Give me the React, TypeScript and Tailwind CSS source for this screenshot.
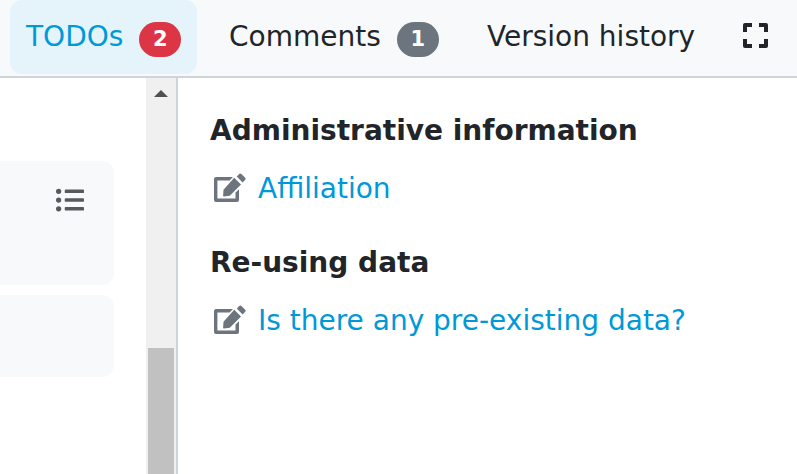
import { FaListUl } from "react-icons/fa";

function EditIcon() {
  return (
    <svg className="mb-[3px] ml-1 mr-3 h-[29px] w-8 shrink-0 fill-[#6c757d]" viewBox="0 0 32 29">
      <path d="M2 4H19L15.6 7.4H3.4V25.6H21.5V19.6L25 16.2V27Q25 29 23 29H2Q0 29 0 27V6Q0 4 2 4Z" />
      <path d="M20.2 4.8L27 11.6L15.8 22.8L9.9 23.5Q9 23.6 9.1 22.7L9.5 16.8L20.2 4.8Z" strokeLinejoin="round" />
      <path d="M22.8 3.4L25 1.2Q26.3 0 27.6 1.2L31 4.6Q32.2 5.9 31 7.1L28.6 9.4Z" />
    </svg>
  );
}

function Section({ title, item }: { title: string; item: string }) {
  return (
    <section className="mb-8">
      <h2 className="h-[42px] leading-[42px] text-[28px] font-bold text-[#212529]">{title}</h2>
      <a className="mt-4 flex h-[42px] items-center text-[28px] text-[#0099d8]">
        <EditIcon />
        <span className="whitespace-nowrap">{item}</span>
      </a>
    </section>
  );
}

export default function App() {
  return (
    <div className="flex h-[474px] w-[797px] flex-col overflow-hidden bg-white font-['DejaVu_Sans',sans-serif] text-[28px] text-[#212529]">
      <header className="flex h-[78px] shrink-0 border-b-2 border-[#ced4da] bg-[#f8f9fb] pl-2.5">
        <div className="flex h-[74px] w-[187px] items-center rounded-[12px] bg-[#e5f4fb] pl-4 text-[#0099d8]">
          <span>TODOs</span>
          <span className="ml-4 mt-1 flex h-[35px] w-[42px] items-center justify-center rounded-full bg-[#dc3545] pt-0.5 text-[21px] font-bold text-white">2</span>
        </div>
        <div className="flex h-[74px] w-[258px] items-center pl-8">
          <span>Comments</span>
          <span className="ml-4 mt-1 flex h-[35px] w-[42px] items-center justify-center rounded-full bg-[#6c757d] pt-0.5 text-[21px] font-bold text-white">1</span>
        </div>
        <div className="flex h-[74px] items-center whitespace-nowrap pl-8">Version history</div>
        <svg className="ml-12 mt-[23px] h-[25px] w-[25px]" viewBox="0 0 25 25" fill="none" stroke="#212529" strokeWidth="4" strokeLinejoin="round">
          <path d="M2 9V2H9M16 2H23V9M23 16V23H16M9 23H2V16" />
        </svg>
      </header>
      <main className="flex min-h-0 flex-1">
        <div className="w-[146px] shrink-0 pt-[83px]">
          <div className="flex h-[124px] w-[114px] justify-end rounded-r-[12px] bg-[#f8f9fb] pr-[30px] pt-[25px]">
            <FaListUl className="size-7 text-[#58595c]" />
          </div>
          <div className="mt-2.5 h-[82px] w-[114px] rounded-r-[12px] bg-[#f8f9fb]" />
        </div>
        <div className="flex w-[30px] shrink-0 flex-col items-center bg-[#f0f0f0] pt-3">
          <svg className="h-[7px] w-[14px]" viewBox="0 0 14 7" fill="#505050"><path d="M0 7L7 0L14 7Z" /></svg>
          <div className="mt-[251px] w-[26px] flex-1 bg-[#c1c1c1]" />
        </div>
        <div className="flex-1 border-l-2 border-[#ced4da] pl-8 pt-8">
          <Section title="Administrative information" item="Affiliation" />
          <Section title="Re-using data" item="Is there any pre-existing data?" />
        </div>
      </main>
    </div>
  );
}
